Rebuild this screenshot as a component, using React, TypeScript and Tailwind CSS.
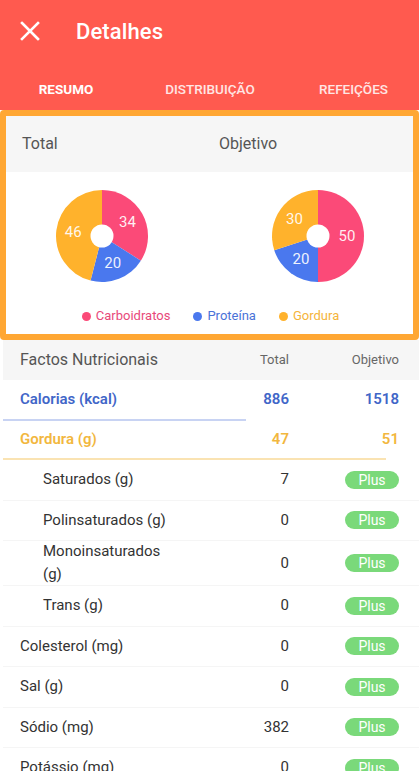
import React from "react";

type Slice = { v: number; c: string };

function Pie({ data }: { data: Slice[] }) {
  const cx = 48;
  const cy = 48;
  const r = 46;
  const total = data.reduce((s, d) => s + d.v, 0);
  let acc = 0;
  const pt = (ang: number, rad: number) => {
    const a = (ang * Math.PI) / 180;
    return [cx + rad * Math.sin(a), cy - rad * Math.cos(a)];
  };
  return (
    <svg width="96" height="96" viewBox="0 0 96 96">
      {data.map((d, i) => {
        const a0 = (acc / total) * 360;
        acc += d.v;
        const a1 = (acc / total) * 360;
        const [x0, y0] = pt(a0, r);
        const [x1, y1] = pt(a1, r);
        const large = a1 - a0 > 180 ? 1 : 0;
        const mid = (a0 + a1) / 2;
        const [lx, ly] = pt(mid, 29);
        return (
          <g key={i}>
            <path d={`M${cx} ${cy} L${x0} ${y0} A${r} ${r} 0 ${large} 1 ${x1} ${y1} Z`} fill={d.c} />
            <text
              x={lx}
              y={ly}
              fill="#ffffff"
              fillOpacity={0.92}
              fontSize="15"
              fontFamily="Roboto, sans-serif"
              textAnchor="middle"
              dominantBaseline="central"
            >
              {d.v}
            </text>
          </g>
        );
      })}
      <circle cx={cx} cy={cy} r={11.5} fill="#ffffff" />
    </svg>
  );
}

const PINK = "#fb4a78";
const BLUE = "#4a78ee";
const ORANGE = "#ffb22c";

type Row = { name: string; val: string; sub?: boolean; h?: string };

const rows: Row[] = [
  { name: "Saturados (g)", val: "7", sub: true },
  { name: "Polinsaturados (g)", val: "0", sub: true },
  { name: "Monoinsaturados (g)", val: "0", sub: true, h: "h-[45px]" },
  { name: "Trans (g)", val: "0", sub: true },
  { name: "Colesterol (mg)", val: "0" },
  { name: "Sal (g)", val: "0" },
  { name: "Sódio (mg)", val: "382" },
  { name: "Potássio (mg)", val: "0" },
];

export default function App() {
  return (
    <div className="w-[419px] h-[771px] overflow-hidden bg-white" style={{ fontFamily: "Roboto, 'Noto Sans', sans-serif" }}>
      {/* Header */}
      <div className="bg-[#ff5a4f] h-[110px] flex flex-col">
        <div className="h-[62px] flex items-center">
          <div className="ml-[20px] w-[20px] h-[20px] flex items-center justify-center">
            <svg width="20" height="20" viewBox="0 0 20 20">
              <path d="M2 2 L18 18 M18 2 L2 18" stroke="#ffffff" strokeWidth="2.6" strokeLinecap="square" />
            </svg>
          </div>
          <div className="ml-[36px] text-white text-[22px] font-medium tracking-[0.1px]">Detalhes</div>
        </div>
        <div className="flex-1 flex items-center pt-[6px] text-[13.5px]">
          <div className="w-[132px] text-center text-white font-bold">RESUMO</div>
          <div className="w-[156px] text-center text-white/85 font-medium">DISTRIBUIÇÃO</div>
          <div className="flex-1 text-center text-white/85 font-medium">REFEIÇÕES</div>
        </div>
      </div>

      {/* Framed chart card */}
      <div className="h-[230px] border-[6px] border-[#ffa733] rounded-[4px] flex flex-col">
        <div className="h-[56px] bg-[#f6f6f6] flex items-center text-[16px] text-[#555555]">
          <div className="pl-[16px] w-[213px]">Total</div>
          <div>Objetivo</div>
        </div>
        <div className="flex-1 flex flex-col">
          <div className="flex pt-[16px] pl-[48px] gap-[120px]">
            <Pie data={[{ v: 34, c: PINK }, { v: 20, c: BLUE }, { v: 46, c: ORANGE }]} />
            <Pie data={[{ v: 50, c: PINK }, { v: 20, c: BLUE }, { v: 30, c: ORANGE }]} />
          </div>
          <div className="mt-[23px] flex justify-center items-center text-[13px] leading-[18px] gap-[23px] pl-[2px]">
            <div className="flex items-center gap-[5px]">
              <span className="w-[9px] h-[9px] rounded-full bg-[#fb4a78]" />
              <span className="text-[#e8487a]">Carboidratos</span>
            </div>
            <div className="flex items-center gap-[5px]">
              <span className="w-[9px] h-[9px] rounded-full bg-[#4a78ee]" />
              <span className="text-[#4a72d8]">Proteína</span>
            </div>
            <div className="flex items-center gap-[5px]">
              <span className="w-[9px] h-[9px] rounded-full bg-[#ffb22c]" />
              <span className="text-[#f5b43a]">Gordura</span>
            </div>
          </div>
        </div>
      </div>

      {/* Table */}
      <div className="pl-[3px]">
        <div className="h-[40px] bg-[#f6f6f6] flex items-center">
          <div className="flex-1 pl-[17px] text-[16px] text-[#555555]">Factos Nutricionais</div>
          <div className="w-[80px] text-right text-[13px] text-[#666666]">Total</div>
          <div className="w-[130px] pr-[20px] text-right text-[13px] text-[#666666]">Objetivo</div>
        </div>

        <div className="h-[39px] flex items-center text-[15px] font-semibold text-[#4166c8]">
          <div className="flex-1 pl-[17px]">Calorias (kcal)</div>
          <div className="w-[80px] text-right">886</div>
          <div className="w-[130px] pr-[20px] text-right">1518</div>
        </div>
        <div className="h-[2px]">
          <div className="h-[2px] bg-[#c8d3f3]" style={{ width: `${(886 / 1518) * 100}%` }} />
        </div>

        <div className="h-[37px] flex items-center text-[15px] font-semibold text-[#f2b73e]">
          <div className="flex-1 pl-[17px]">Gordura (g)</div>
          <div className="w-[80px] text-right">47</div>
          <div className="w-[130px] pr-[20px] text-right">51</div>
        </div>
        <div className="h-[2px]">
          <div className="h-[2px] bg-[#fae3b2]" style={{ width: `${(47 / 51) * 100}%` }} />
        </div>

        {rows.map((r, i) => (
          <div
            key={i}
            className={`${r.h ?? "h-[40.5px]"} flex items-center border-b border-[#f5f5f5] text-[15px] leading-[23px] text-[#333333]`}
          >
            <div className={`flex-1 ${r.sub ? "pl-[40px]" : "pl-[17px]"}`}>
              <div className="max-w-[128px]">{r.name}</div>
            </div>
            <div className="w-[80px] text-right">{r.val}</div>
            <div className="w-[130px] pr-[20px] flex justify-end">
              <div className="w-[54px] h-[18px] rounded-full bg-[#7ad97a] text-white text-[14px] leading-[18px] text-center">
                Plus
              </div>
            </div>
          </div>
        ))}
      </div>
    </div>
  );
}
